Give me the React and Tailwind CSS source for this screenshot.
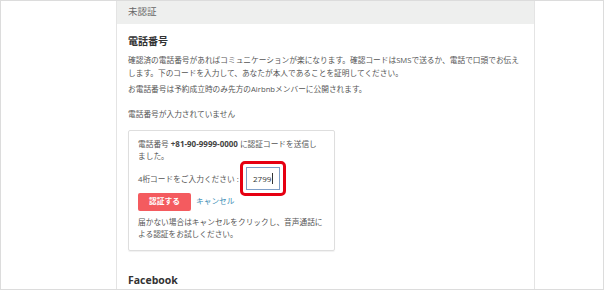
const jp = { fontFamily: '"Open Sans", "Noto Sans CJK JP", sans-serif' };

export default function App() {
  return (
    <div
      className="w-[604px] h-[290px] border border-[#dcdcdc] bg-white overflow-hidden"
      style={jp}
    >
      <div className="ml-[115px] w-[419px] h-full border-x border-[#e4e4e4]">
        {/* header */}
        <div className="h-[23px] bg-[#eeefee] px-[11px] flex items-center text-[9.5px] text-[#666]">
          未認証
        </div>

        <div className="px-[11px]">
          <h2 className="mt-[10px] text-[10px] leading-[14px] font-bold text-[#333]">電話番号</h2>
          <p className="mt-[6px] text-[7.7px] leading-[13px] text-[#555]">
            確認済の電話番号があればコミュニケーションが楽になります。確認コードはSMSで送るか、電話で口頭でお伝え
            <br />
            します。下のコードを入力して、あなたが本人であることを証明してください。
          </p>
          <p className="mt-[3px] text-[7.7px] leading-[13px] text-[#555]">
            お電話番号は予約成立時のみ先方のAirbnbメンバーに公開されます。
          </p>
          <p className="mt-[12px] text-[7.7px] leading-[13px] text-[#555]">電話番号が入力されていません</p>

          {/* verification box */}
          <div className="mt-[9px] w-[207px] border border-[#dedede] rounded-[2px] shadow-[0_1px_1px_rgba(0,0,0,0.06)] px-[9px] pt-[7px] pb-[10px] text-[7.7px] text-[#555]">
            <p className="leading-[12px]">
              電話番号 <span className="font-bold text-[#444] text-[8px]">+81-90-9999-0000</span> に認証コードを送信し
              <br />
              ました。
            </p>

            <div className="mt-[5px] flex items-center">
              <span className="w-[108px] leading-[12px]">4桁コードをご入力ください :</span>
              <div className="relative">
                <div className="w-[34px] h-[23px] border border-[#7f9ec7] bg-white flex items-center pl-[6px] text-[8px] text-[#333]">
                  2799<span className="ml-[1px] w-px h-[11px] bg-[#333]"></span>
                </div>
                <div className="absolute -inset-[6px] border-[3px] border-[#e60012] rounded-[5px]"></div>
              </div>
            </div>

            <div className="mt-[3px] flex items-center">
              <button className="w-[53px] h-[18px] rounded-[2px] bg-[#f45b5f] text-white text-[7.7px] font-bold flex items-center justify-center">
                認証する
              </button>
              <span className="ml-[5px] text-[#3b8db5]">キャンセル</span>
            </div>

            <p className="mt-[5px] leading-[12px]">
              届かない場合はキャンセルをクリックし、音声通話に
              <br />
              よる認証をお試しください。
            </p>
          </div>

          <h2 className="mt-[22px] text-[10.5px] leading-[14px] font-bold text-[#333]">Facebook</h2>
        </div>
      </div>
    </div>
  );
}
